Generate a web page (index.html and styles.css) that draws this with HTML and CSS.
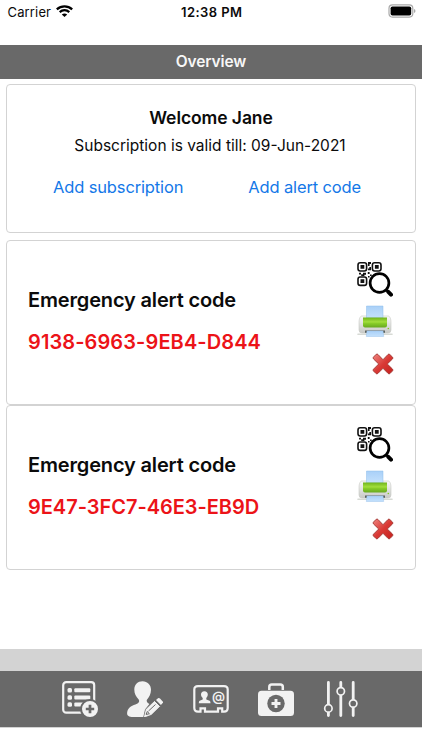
FILE: index.html
```html
<!DOCTYPE html>
<html lang="en">
<head>
<meta charset="utf-8">
<title>Overview</title>
<link rel="stylesheet" href="styles.css">
</head>
<body>
<svg class="defs" aria-hidden="true">
  <defs>
    <linearGradient id="paper" x2="0" y2="1"><stop stop-color="#a9d0f8"/><stop offset="1" stop-color="#c4e1fc"/></linearGradient>
    <linearGradient id="green" x2="0" y2="1"><stop stop-color="#6fb41c"/><stop offset=".45" stop-color="#a4df3e"/><stop offset=".55" stop-color="#8bd02a"/><stop offset="1" stop-color="#68a820"/></linearGradient>
    <linearGradient id="shell" x2="0" y2="1"><stop stop-color="#fafafa"/><stop offset="1" stop-color="#c8c9c6"/></linearGradient>
    <linearGradient id="red" x2="1" y2="1"><stop stop-color="#ef8580"/><stop offset=".5" stop-color="#d93a36"/><stop offset="1" stop-color="#c5201d"/></linearGradient>
    <symbol id="scan" viewBox="0 0 36 36">
      <g fill="#fff" stroke="#111" stroke-width="1.6">
        <rect x="1" y="1.8" width="8.6" height="8.2" rx="2.2"/>
        <rect x="15.4" y="1.8" width="8.6" height="8.2" rx="2.2"/>
        <rect x="1" y="16" width="8.6" height="8.4" rx="2.2"/>
      </g>
      <path d="M3.5 4h3.8v3.8H3.5zM17.9 4h3.8v3.8h-3.8zM3.5 18.3h3.8v3.8H3.5zM11 1h3v2h-1.4v2H11zM12.3 6H14v3.2h-3V7.6h1.3zM2 11.8h2v1.4h2v-1.4h3v2H7.4V15H4.2v-1.5H2zM10.8 11h1.8v2h-1.8zM13 13.4h1.7V15H13zM11 15h1.6v1.6H11z" fill="#111"/>
      <circle cx="22.500" cy="22" r="9.400" fill="#fff" stroke="#000" stroke-width="2.700"/>
      <path d="m29.300 28.800 1.600 1.600" stroke="#000" stroke-width="2.400"/>
      <path d="m31.300 30.800 2.700 2.800" stroke="#000" stroke-width="4" stroke-linecap="round"/>
    </symbol>
    <symbol id="printer" viewBox="0 0 36 34">
      <path d="M1 29.200h34" stroke="#d7dad5" stroke-width="1.600" stroke-linecap="round"/>
      <path d="M5 11h26c2 0 3 3 3 6.500v7.500q0 3-3 3H5q-3 0-3-3v-7.500C2 14 3 11 5 11z" fill="url(#shell)" stroke="#c7c9c5" stroke-width=".6"/>
      <path d="M9.500 1H26v12H9.500z" fill="url(#paper)" stroke="#8dbcea" stroke-width=".5"/>
      <path d="M6 12.500h24v8q0 2-2 2H8q-2 0-2-2z" fill="url(#green)"/>
      <path d="M8 25.500h20v2.300H8z" fill="#59615f"/>
      <path d="M10 26h16l.7 5.500H9.300z" fill="url(#paper)" stroke="#9cc4ec" stroke-width=".5"/>
      <circle cx="31.300" cy="23.500" r=".8" fill="#7fc81e"/>
    </symbol>
    <symbol id="cross" viewBox="0 0 22 22">
      <path d="M4.200 1.300Q5.200.7 6 1.500L11 6.700l5-5.200q.8-.8 1.800 0l2.800 2.700q.7.900-.1 1.700L15.300 11l5.200 5.100q.8.900.1 1.700l-2.700 2.800q-.9.700-1.700-.1L11 15.300l-5.200 5.200q-.9.800-1.700.1l-2.700-2.700q-.7-.9.100-1.700L6.700 11 1.500 5.900q-.8-.9-.1-1.700z" fill="url(#red)" stroke="#9f3631" stroke-width=".9"/>
    </symbol>
  </defs>
</svg>

<div class="status">
  <div class="carrier"><span>Carrier</span>
    <svg width="17" height="12" viewBox="0 0 17 12"><g fill="none" stroke="#000" stroke-width="2.300"><path d="M.8 4.300Q4.200 1.300 8.500 1.300T16.200 4.300"/><path d="M3.700 7.100Q5.900 5.200 8.500 5.200t4.800 1.900"/></g><path d="M5.800 9.400q2.700-2 5.400 0L8.500 12z"/></svg>
  </div>
  <div class="time">12:38 PM</div>
  <svg class="battery" width="28" height="14" viewBox="0 0 28 14"><rect x="1" y=".9" width="23.800" height="12.200" rx="3.500" fill="none" stroke="#a9a9a9" stroke-width="1.200"/><rect x="2.600" y="2.500" width="20.600" height="9" rx="1.800"/><path d="M26 5q1.500.6 1.500 2T26 9z" fill="#a9a9a9"/></svg>
</div>
<header class="title">Overview</header>

<main>
  <section class="card welcome">
    <h1>Welcome Jane</h1>
    <p>Subscription is valid till: 09-Jun-2021</p>
    <nav class="links"><a>Add subscription</a><a>Add alert code</a></nav>
  </section>
  <section class="card alert">
    <div class="info"><h2>Emergency alert code</h2><strong class="code-a">9138-6963-9EB4-D844</strong></div>
    <div class="actions"><svg class="scan"><use href="#scan"/></svg><svg class="printer"><use href="#printer"/></svg><svg class="cross"><use href="#cross"/></svg></div>
  </section>
  <section class="card alert">
    <div class="info"><h2>Emergency alert code</h2><strong class="code-b">9E47-3FC7-46E3-EB9D</strong></div>
    <div class="actions"><svg class="scan"><use href="#scan"/></svg><svg class="printer"><use href="#printer"/></svg><svg class="cross"><use href="#cross"/></svg></div>
  </section>
</main>

<div class="strip"></div>
<footer class="tabs">
  <svg viewBox="0 0 36 36">
    <rect x="1.200" y="1.200" width="31" height="30.500" rx="3" fill="none" stroke="#f2f2f2" stroke-width="2.200"/>
    <g fill="#f2f2f2"><rect x="5.500" y="7" width="4.500" height="4.500" rx="1.500"/><rect x="5.500" y="14.200" width="4.500" height="4.500" rx="1.500"/><rect x="5.500" y="21.200" width="4.500" height="4.500" rx="1.500"/><rect x="12.300" y="7.200" width="16" height="4" rx="1"/><rect x="12.300" y="14.400" width="16" height="4" rx="1"/><rect x="12.300" y="21.400" width="10" height="4" rx="1"/></g>
    <circle cx="28" cy="28" r="9" fill="#f2f2f2" stroke="#696969" stroke-width="2"/>
    <path d="M28 23.800v8.400M23.800 28h8.400" stroke="#696969" stroke-width="2.700"/>
  </svg>
  <svg viewBox="0 0 36 36">
    <path d="M15.500.2c5 0 8.500 3.500 8.500 8.600 0 4.400-2 7.500-4.100 9.900-.7 1.500.2 3 2.500 4.200L18 28.500 16.300 36H6C2 36 .1 35 .1 32.300c0-5 4-7.600 8.300-8.900 3.500-1.100 4.600-3 3.300-5C9 15.500 7.300 12.800 7.300 8.500 7.300 3.500 10.800.2 15.500.2z" fill="#f2f2f2"/>
    <path d="m17.400 36 1.900-7.700 8.600-8.200 5 5-8.600 8.300z" fill="#f2f2f2" stroke="#f2f2f2" stroke-width=".8"/>
    <path d="m29 19 2-1.700q1-.7 2 .3l2.700 2.800q.8.900 0 1.700L33.900 24z" fill="#f2f2f2"/>
    <path d="m28 20 5 5M21.500 30l7-6.500M19.200 33.500l1-3 2.200 2.200z" fill="none" stroke="#696969" stroke-width="1"/>
  </svg>
  <svg viewBox="0 0 36 36">
    <path d="M5 5.700h26q3.700 0 3.700 3.500v18.500q0 3.600-3.700 3.600h-1.800v-3.400h-4.200v3.400H12v-3.400H7.500v3.400H5q-3.700 0-3.700-3.600V9.200q0-3.500 3.700-3.500z" transform="translate(0 -.6)" fill="none" stroke="#f2f2f2" stroke-width="2.200"/>
    <path d="M11.300 10.200c2.300 0 3.500 1.500 3.500 3.400 0 1.600-.8 2.600-1.500 3.500v1.500l3.300 1.200q.9.500.9 2.400H5.800q0-1.900.9-2.400l3-1.200v-1.500c-.9-.9-1.700-1.900-1.700-3.500 0-1.900 1.200-3.400 3.300-3.400z" fill="#f2f2f2"/>
    <text class="at" x="25.400" y="20.200" text-anchor="middle">@</text>
  </svg>
  <svg viewBox="0 0 36 36">
    <path d="M11.300 9V6q0-2.500 2.500-2.500h8.500q2.500 0 2.500 2.500v3" fill="none" stroke="#f2f2f2" stroke-width="2.500"/>
    <rect x="0" y="9.800" width="36" height="25.200" rx="3.500" fill="#f2f2f2"/>
    <circle cx="18" cy="22.500" r="8.700" fill="#696969"/><path d="M18 18v9M13.500 22.500h9" stroke="#f2f2f2" stroke-width="2.900"/>
  </svg>
  <svg viewBox="0 0 36 36">
    <path d="M5.400 1.400v33.200M17.800 1.400v33.200M30.200 1.400v33.200" stroke="#f2f2f2" stroke-width="2.800" stroke-linecap="round"/>
    <g fill="#696969" stroke="#f2f2f2" stroke-width="1.700"><circle cx="5.400" cy="27.400" r="3.700"/><circle cx="17.800" cy="10.300" r="3.700"/><circle cx="30.200" cy="22.500" r="3.700"/></g>
  </svg>
</footer>
</body>
</html>
```
FILE: styles.css
```css
* { box-sizing: border-box; }
body {
  margin: 0;
  width: 422px;
  height: 750px;
  overflow: hidden;
  display: flex;
  flex-direction: column;
  background: #fff;
  color: #0b0b0b;
  font-family: Inter, Roboto, sans-serif;
}
h1, h2, p { margin: 0; }
.defs { position: absolute; width: 0; height: 0; }
.status {
  height: 45px;
  flex: none;
  display: grid;
  grid-template-columns: 1fr auto 1fr;
  align-items: start;
  padding: 4px 6px 0 7.500px;
  line-height: 16px;
}
.carrier { display: flex; gap: 5px; font-size: 13px; letter-spacing: .15px; }
.carrier svg { margin-top: 1px; }
.time { font-size: 13px; font-weight: 600; letter-spacing: .42px; }
.battery { justify-self: end; }
.title {
  height: 34px;
  flex: none;
  background: #696969;
  color: #f7f7f7;
  font-size: 15.500px;
  font-weight: 600;
  line-height: 33px;
  letter-spacing: -.1px;
  text-align: center;
}
main { height: 570px; flex: none; padding: 5px 6px 0; }
.card { border: 1.500px solid #d3d3d3; border-radius: 4px; background: #fff; }
.welcome { height: 149px; margin: 0 0 7px; padding-top: 21px; text-align: center; }
h1 { font-size: 17.500px; font-weight: 600; line-height: 24px; letter-spacing: -.08px; }
.welcome p { font-size: 15.500px; line-height: 22px; margin-top: 5px; margin-left: -2px; }
.links { display: flex; margin-top: 19px; padding-left: 46px; gap: 65px; font-size: 16.500px; line-height: 22px; letter-spacing: -.14px; color: #1478e8; }
.alert { height: 165px; display: flex; justify-content: space-between; padding: 20px 21px 0; }
.info { padding-top: 26px; }
h2 { font-size: 20px; font-weight: 600; line-height: 26px; letter-spacing: -.16px; }
.info strong { display: block; margin-top: 16px; font-size: 20px; font-weight: 600; line-height: 26px; color: #ec1318; }
.code-a { letter-spacing: .1px; }
.code-b { letter-spacing: -.03px; }
.actions { display: flex; flex-direction: column; align-items: flex-end; }
.scan { width: 36px; height: 36px; margin-right: 1px; }
.printer { width: 36px; height: 34px; margin: 8px 1px 0 0; }
.cross { width: 22px; height: 22px; margin-top: 14px; }
.strip { height: 22px; flex: none; background: #d3d3d3; }
.tabs { height: 57px; flex: none; display: flex; gap: 29.300px; padding: 10px 0 0 62px; background: #696969; border-bottom: 1px solid #d3d3d3; }
.tabs svg { width: 36px; height: 36px; flex: none; }
.at { font: 600 13px Inter, sans-serif; fill: #f2f2f2; }
```
